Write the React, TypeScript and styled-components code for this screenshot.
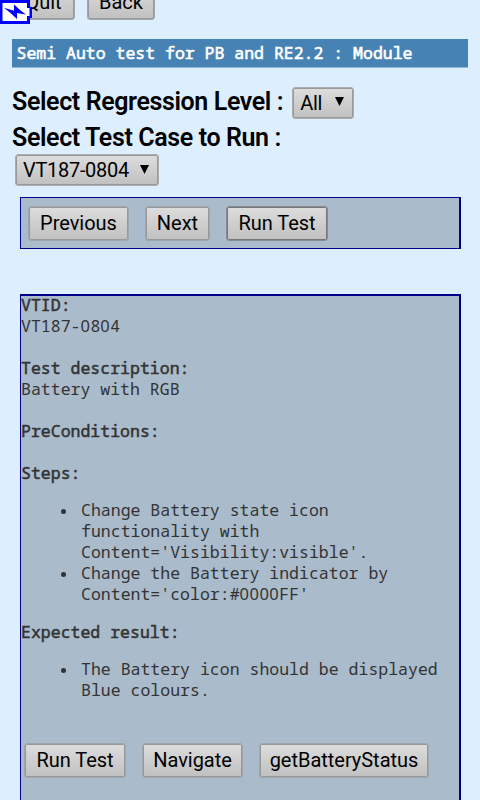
import React from "react";
import styled, { createGlobalStyle } from "styled-components";

const Global = createGlobalStyle`
  * { box-sizing: border-box; }
  body { margin: 0; background: #def; overflow: hidden; }
`;

const Page = styled.main`
  position: relative;
  width: 480px;
  height: 800px;
  overflow: hidden;
  background: #ddeeff;
  color: #000;
  font-family: Roboto, sans-serif;
`;

const Battery = styled.svg`
  position: absolute;
  left: 0;
  top: 0;
`;

const TopBar = styled.div`
  display: flex;
  gap: 12px;
  height: 39px;
  padding-left: 12px;
  align-items: flex-start;
`;

const Button = styled.button<{ $w: number; $strong?: boolean; $raised?: boolean }>`
  flex: none;
  width: ${(p) => p.$w}px;
  height: 35px;
  padding: 0;
  margin-top: ${(p) => (p.$raised ? -15 : 0)}px;
  border: 1px solid ${(p) => (p.$strong ? "#858c92" : "#9da5ad")};
  border-radius: 3px;
  box-shadow: inset 0 0 0 1px ${(p) => (p.$strong ? "#777" : "#999")};
  background: linear-gradient(#dddddd, #c0c0c0);
  color: #000;
  font: 400 20px/33px Roboto, sans-serif;
  letter-spacing: -0.02px;
  white-space: nowrap;
`;

const Banner = styled.header`
  height: 29px;
  margin: 0 12px;
  padding-left: 4.5px;
  background: #4682b4;
  border-bottom: 1px solid #90b7da;
  color: #fff;
  font: 400 16.5px/28px "Noto Sans Mono", "DejaVu Sans Mono", monospace;
  -webkit-text-stroke: 0.6px #fff;
  white-space: pre;
`;

const Form = styled.section`
  height: 129px;
  padding: 16px 0 0 12px;
`;

const Row = styled.div`
  display: flex;
  height: 36px;
  align-items: center;
  gap: 9px;
`;

const Label = styled.label`
  font: 600 25px/36px Roboto, sans-serif;
  letter-spacing: -0.38px;
  white-space: nowrap;
`;

const Picker = styled.div<{ $w: number; $indent?: boolean }>`
  display: flex;
  justify-content: space-between;
  align-items: center;
  width: ${(p) => p.$w}px;
  height: 32px;
  margin-left: ${(p) => (p.$indent ? 3 : 0)}px;
  margin-top: ${(p) => (p.$indent ? -2 : 1)}px;
  padding: 0 9px 0 7px;
  border: 1px solid #aaaeb2;
  border-radius: 3px;
  box-shadow: inset 0 0 0 1px #999;
  background: linear-gradient(#dddddd, #c0c0c0);
  font: 400 20px/30px Roboto, sans-serif;
  letter-spacing: -0.3px;
`;

const Actions = styled.nav`
  display: flex;
  gap: 16px;
  width: 441px;
  height: 52px;
  margin-left: 20px;
  padding: 8px 0 0 7px;
  border: 1px solid #00008b;
  border-right-width: 2px;
  background: #aabbcc;
`;

const Details = styled.article`
  width: 441px;
  height: 520px;
  margin: 45px 0 0 20px;
  border: 1px solid #00008b;
  border-top-width: 2px;
  border-right-width: 2px;
  background: #aabbcc;
  color: #333;
  font: 400 16.5px/21px "Noto Sans Mono", "DejaVu Sans Mono", monospace;
  letter-spacing: 0.01px;
`;

const Content = styled.div`
  margin-top: -2px;
`;

const Heading = styled.h2`
  margin: 0;
  font: inherit;
  -webkit-text-stroke: 0.5px #333;
`;

const Text = styled.p`
  margin: 0 0 21px;
`;

const List = styled.ul`
  margin: 16px 0 17px;
  padding: 0 0 0 60px;
  list-style: none;
`;

const Item = styled.li`
  display: flex;
  margin-left: -20px;
  white-space: pre;
  &::before {
    content: "";
    flex: none;
    width: 5px;
    height: 5px;
    margin: 10px 15px 0 0;
    border-radius: 50%;
    background: #333;
  }
`;

/* Open zeros, padded to the monospace advance. */
const Zeros = styled.span`
  font-family: "Noto Sans", sans-serif;
  line-height: 1;
  letter-spacing: 0.48px;
`;

const Footer = styled.div`
  display: flex;
  gap: 16px;
  padding: 26px 0 0 3px;
`;

const Arrow = () => (
  <svg width="9" height="11" viewBox="0 0 9 11">
    <path d="M0 0h9L4.5 9z" fill="#000" />
  </svg>
);

export default function App() {
  return (
    <Page>
      <Global />
      <TopBar>
        <Button $w={63} $raised>Quit</Button>
        <Button $w={68} $raised>Back</Button>
      </TopBar>
      <Battery width="32" height="24" viewBox="0 0 32 24">
        <path d="M0 0h30v7h2v11h-2v6H0z" fill="#0000ff" />
        <path d="M2.5 3h24.5v5h2.5v8H27v5H2.5z" fill="#fff" />
        <path d="M4 7.7l10 3V4.5l6 5.5 6 4.5-9-1.5v6l-6.5-6z" fill="#0000ff" />
      </Battery>
      <Banner>Semi Auto test for PB and RE2.2 : Module</Banner>
      <Form>
        <Row>
          <Label>Select Regression Level :</Label>
          <Picker $w={62}>All<Arrow /></Picker>
        </Row>
        <Row><Label>Select Test Case to Run :</Label></Row>
        <Picker $w={144} $indent>VT187-0804<Arrow /></Picker>
      </Form>
      <Actions>
        <Button $w={101}>Previous</Button>
        <Button $w={65}>Next</Button>
        <Button $w={102} $strong>Run Test</Button>
      </Actions>
      <Details>
        <Content>
          <Heading>VTID:</Heading>
          <Text>VT187-<Zeros>0</Zeros>8<Zeros>0</Zeros>4</Text>
          <Heading>Test description:</Heading>
          <Text>Battery with RGB</Text>
          <Heading>PreConditions:</Heading>
          <Text />
          <Heading>Steps:</Heading>
          <List>
            <Item>{"Change Battery state icon\nfunctionality with\nContent='Visibility:visible'."}</Item>
            <Item>
              <span>{"Change the Battery indicator by\nContent='color:#"}<Zeros>0000</Zeros>FF'</span>
            </Item>
          </List>
          <Heading>Expected result:</Heading>
          <List>
            <Item>{"The Battery icon should be displayed\nBlue colours."}</Item>
          </List>
          <Footer>
            <Button $w={102}>Run Test</Button>
            <Button $w={101}>Navigate</Button>
            <Button $w={170}>getBatteryStatus</Button>
          </Footer>
        </Content>
      </Details>
    </Page>
  );
}
